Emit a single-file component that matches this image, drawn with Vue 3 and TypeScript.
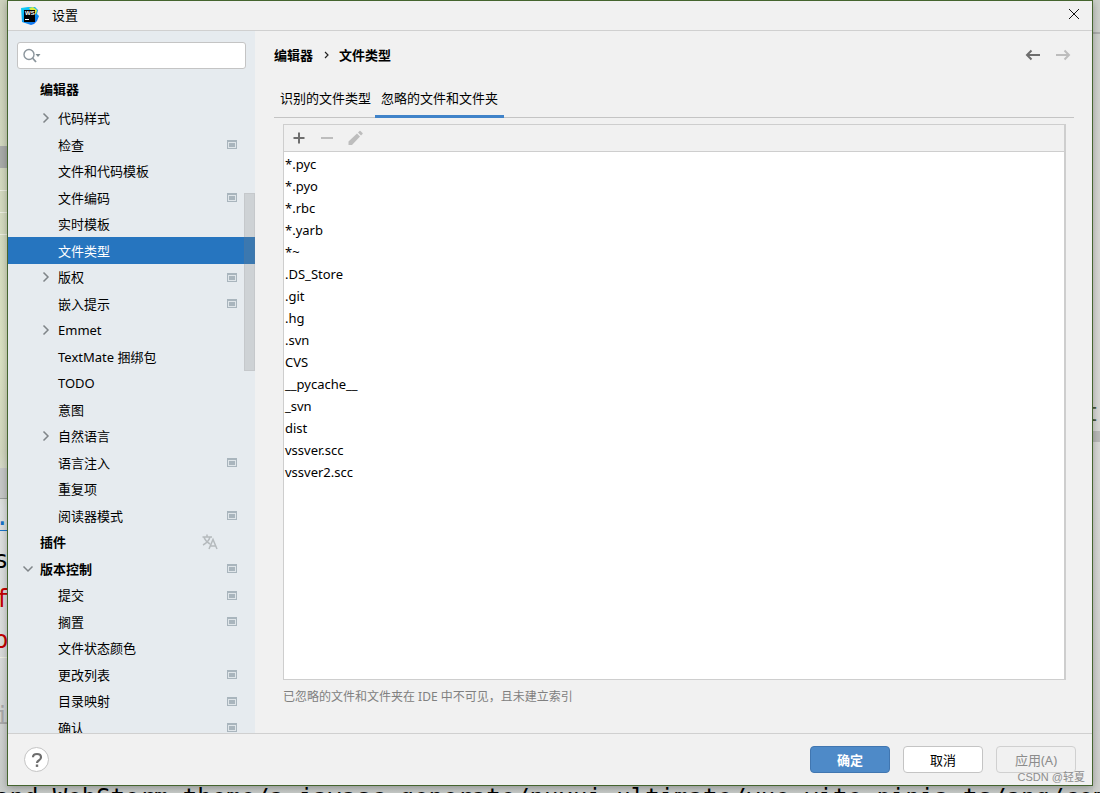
<script setup lang="ts">
import { ref } from 'vue'

interface TreeItem {
  label: string
  level: 0 | 1
  arrow?: 'right' | 'down'
  project?: boolean
  translate?: boolean
}

const items: TreeItem[] = [
  { label: '代码样式', level: 1, arrow: 'right' },
  { label: '检查', level: 1, project: true },
  { label: '文件和代码模板', level: 1 },
  { label: '文件编码', level: 1, project: true },
  { label: '实时模板', level: 1 },
  { label: '文件类型', level: 1 },
  { label: '版权', level: 1, arrow: 'right', project: true },
  { label: '嵌入提示', level: 1, project: true },
  { label: 'Emmet', level: 1, arrow: 'right' },
  { label: 'TextMate 捆绑包', level: 1 },
  { label: 'TODO', level: 1 },
  { label: '意图', level: 1 },
  { label: '自然语言', level: 1, arrow: 'right' },
  { label: '语言注入', level: 1, project: true },
  { label: '重复项', level: 1 },
  { label: '阅读器模式', level: 1, project: true },
  { label: '插件', level: 0, translate: true },
  { label: '版本控制', level: 0, arrow: 'down', project: true },
  { label: '提交', level: 1, project: true },
  { label: '搁置', level: 1, project: true },
  { label: '文件状态颜色', level: 1 },
  { label: '更改列表', level: 1, project: true },
  { label: '目录映射', level: 1, project: true },
  { label: '确认', level: 1, project: true },
]

const patterns: string[] = [
  '*.pyc', '*.pyo', '*.rbc', '*.yarb', '*~', '.DS_Store', '.git', '.hg',
  '.svn', 'CVS', '__pycache__', '_svn', 'dist', 'vssver.scc', 'vssver2.scc',
]

const tabs: string[] = ['识别的文件类型', '忽略的文件和文件夹']

const selected = ref('文件类型')
const activeTab = ref(1)
const query = ref('')
</script>

<template>
  <div class="desktop">
    <div class="editor" aria-hidden="true">
      <i class="band band-left"></i>
      <i class="rule r1"></i>
      <i class="rule r2"></i>
      <i class="rule r3"></i>
      <i class="rule r4"></i>
      <i class="band band-low"></i>
      <i class="band band-right"></i>
      <i class="band band-right-top"></i>
      <span class="code c-link">.</span>
      <span class="code c-s">s</span>
      <span class="code c-f">f</span>
      <span class="code c-o">o</span>
      <span class="code c-i">i</span>
      <span class="code c-t">t<b>(</b></span>
      <span class="code c-line">and WebStorm theme/a javasc generate/nuxui ultimate/vue vite pinia ts/ang/com</span>
    </div>

    <div class="window" role="dialog" aria-labelledby="dialog-title">
      <header class="titlebar">
        <svg class="logo" width="20" height="20" viewBox="0 0 20 20" aria-hidden="true">
          <defs>
            <linearGradient id="ws" x1="0" y1="0" x2="0.6" y2="1">
              <stop offset="0" stop-color="#12d5f5" />
              <stop offset="0.55" stop-color="#08a5f2" />
              <stop offset="1" stop-color="#1272f0" />
            </linearGradient>
          </defs>
          <path d="M1 2L8 1L15 1L18 4L17 8L19 10L17 15L14 18L11 19L5 17L2 16Z" fill="url(#ws)" />
          <path d="M9 2L13 1L17 4L16 8L12 6Z" fill="#dbe93c" />
          <rect x="4" y="4" width="11" height="12" fill="#000" />
          <text x="5" y="9" font-size="6" font-weight="700" fill="#fff" font-family="Liberation Sans, sans-serif">WS</text>
          <rect x="5" y="13" width="4" height="1" fill="#fff" />
        </svg>
        <h1 id="dialog-title">设置</h1>
        <button class="close" type="button" aria-label="关闭">
          <svg width="12" height="12" viewBox="0 0 12 12"><path d="M1 1L11 11M11 1L1 11" stroke="#111" fill="none" /></svg>
        </button>
      </header>

      <div class="body">
        <aside class="sidebar">
          <div class="search">
            <svg width="20" height="16" viewBox="0 0 20 16" aria-hidden="true">
              <circle cx="6" cy="6.5" r="5" fill="none" stroke="#8b959c" stroke-width="1.4" />
              <path d="M9.500 10L13 14" stroke="#8b959c" stroke-width="1.8" />
              <path d="M12.500 6H17.500L15 9Z" fill="#7f8b91" />
            </svg>
            <input v-model="query" type="text" aria-label="搜索设置" />
          </div>
          <nav class="tree" aria-label="设置">
            <a class="group" href="#">编辑器</a>
            <ul>
              <li v-for="item in items" :key="item.label">
                <a
                  href="#"
                  :class="['node', 'level-' + item.level, { selected: item.label === selected }]"
                  @click.prevent="selected = item.label"
                >
                  <span class="twisty">
                    <svg v-if="item.arrow === 'right'" width="10" height="12" viewBox="0 0 10 12"><path d="M2.500 1.500L7 6L2.500 10.500" /></svg>
                    <svg v-if="item.arrow === 'down'" width="12" height="10" viewBox="0 0 12 10"><path d="M1.500 2.500L6 7L10.500 2.500" /></svg>
                  </span>
                  <span class="label">{{ item.label }}</span>
                  <svg v-if="item.translate" class="translate" width="16" height="16" viewBox="0 0 16 16">
                    <path d="M0.500 3H10M5 0.500V3M2 3C3 6.500 5.500 8.500 8 10M8 3C7 6.500 4 9.500 1 11" />
                    <path d="M7 15L11 5.500L15 15M8.500 12H13.500" />
                  </svg>
                  <svg v-if="item.project" class="project" width="10" height="9" viewBox="0 0 10 9">
                    <path d="M0 0H10V9H0Z" fill="#a9b5bd" />
                    <path d="M1 2H9V8H1Z" fill="#dfe5e9" />
                    <path d="M2 3H8V7H2Z" fill="#a9b5bd" />
                  </svg>
                </a>
              </li>
            </ul>
          </nav>
          <div class="thumb"></div>
        </aside>

        <main class="content">
          <div class="crumbs">
            <span>编辑器</span>
            <svg width="6" height="8" viewBox="0 0 6 8" aria-hidden="true"><path d="M2 1L5 4L2 7" fill="none" stroke="#222" stroke-width="1.200" /></svg>
            <span>文件类型</span>
            <div class="history">
              <button type="button" aria-label="后退">
                <svg width="16" height="12" viewBox="0 0 16 12"><path d="M15 6H2M6.500 1.500L2 6L6.500 10.500" fill="none" stroke="#6e6e6e" stroke-width="2" /></svg>
              </button>
              <button type="button" aria-label="前进" disabled>
                <svg width="16" height="12" viewBox="0 0 16 12"><path d="M1 6H14M9.500 1.500L14 6L9.500 10.500" fill="none" stroke="#bdbdbd" stroke-width="2" /></svg>
              </button>
            </div>
          </div>

          <div class="tabs" role="tablist">
            <button
              v-for="(tab, i) in tabs"
              :key="tab"
              type="button"
              role="tab"
              :aria-selected="i === activeTab"
              :class="{ active: i === activeTab }"
              @click="activeTab = i"
            >{{ tab }}</button>
          </div>

          <section class="panel">
            <div class="toolbar">
              <button type="button" aria-label="添加">
                <svg width="16" height="16" viewBox="0 0 16 16"><path d="M8 2.500V13.500M2.500 8H13.500" stroke="#6e6e6e" stroke-width="2" /></svg>
              </button>
              <button type="button" aria-label="移除" disabled>
                <svg width="16" height="16" viewBox="0 0 16 16"><path d="M2 8H14" stroke="#bdbdbd" stroke-width="2" /></svg>
              </button>
              <button type="button" aria-label="编辑" disabled>
                <svg width="16" height="16" viewBox="0 0 16 16"><path d="M1.500 15V11.500L10 3.500L13 6.500L5 15ZM11 2.500L12.500 1Q13 0.500 13.500 1L15.500 3Q16 3.500 15.500 4L14 5.500Z" fill="#bdbdbd" /></svg>
              </button>
            </div>
            <ul class="patterns">
              <li v-for="p in patterns" :key="p">{{ p }}</li>
            </ul>
          </section>
          <p class="note">已忽略的文件和文件夹在 IDE 中不可见，且未建立索引</p>
        </main>
      </div>

      <footer class="footer">
        <button class="help" type="button" aria-label="帮助">
          <svg width="12" height="16" viewBox="0 0 12 16"><path d="M2 5.200Q2 2 6 2T10 5.200Q10 7 8 8.300Q6 9.500 6 11" fill="none" stroke="#6e6e6e" stroke-width="2.200" /><rect x="4.800" y="12.500" width="2.400" height="2.400" fill="#6e6e6e" /></svg>
        </button>
        <button class="btn primary" type="button">确定</button>
        <button class="btn" type="button">取消</button>
        <button class="btn" type="button" disabled>应用(A)</button>
      </footer>
      <span class="watermark">CSDN @轻夏</span>
    </div>
  </div>
</template>

<style>
html,
body {
  margin: 0;
}
</style>

<style scoped>
.desktop {
  position: relative;
  box-sizing: border-box;
  height: 100vh;
  padding: 0 7px 7px;
  overflow: hidden;
  background: linear-gradient(#cdd2bd 0, #dbe3c4 45%, #d3d8bf 57%, #dfe2e1 64%, #dcdedd 80%, #c9cdca 100%);
  color: #000;
  font: 13px/20px "Noto Sans", "Noto Sans CJK SC", sans-serif;
}
button,
input {
  font: inherit;
  color: inherit;
}
button {
  padding: 0;
  border: 0;
  background: none;
}
svg {
  display: block;
}
ul {
  margin: 0;
  padding: 0;
  list-style: none;
}
a {
  color: inherit;
  text-decoration: none;
}

/* Editor peeking out behind the dialog */
.editor::after {
  content: "";
  position: absolute;
  top: 0;
  right: 0;
  bottom: 0;
  width: 7px;
  background: linear-gradient(#cdd1cb, #d8d8d4 30%, #d9dad7 60%, #d0d1ce);
}
.band,
.rule,
.code {
  position: absolute;
}
.band-left { left: 0; top: 146px; width: 7px; height: 22px; background: #aaadaa; }
.band-low { left: 0; top: 468px; width: 7px; height: 30px; background: #c7c9c8; border-bottom: 1px solid #999f9c; }
.band-right { right: 0; top: 431px; width: 7px; height: 11px; background: #b9bab8; z-index: 1; }
.band-right-top { right: 0; top: 32px; width: 7px; height: 2px; background: #aeb0ae; z-index: 1; }
.rule { left: 0; width: 7px; height: 1px; background: #eef0e3; }
.r1 { top: 190px; }
.r2 { top: 212px; }
.r3 { top: 234px; }
.r4 { top: 657px; }
.code {
  font: 24px/30px "DejaVu Sans Mono", monospace;
  white-space: pre;
}
.c-link { left: -5px; top: 502px; color: #1874c8; border-bottom: 1px solid #1874c8; height: 28px; }
.c-s { left: -6px; top: 545px; }
.c-f { left: -5px; top: 584px; color: #c40000; }
.c-o { left: -6px; top: 625px; color: #c40000; }
.c-i { left: -5px; top: 701px; color: #aaa; }
.c-t { right: -13px; top: 398px; z-index: 1; color: #4c5637; }
.c-t b { color: #a8741a; font-weight: 400; }
.c-line { left: -5px; top: 783px; z-index: 1; }

.window {
  position: relative;
  z-index: 2;
  box-sizing: border-box;
  display: flex;
  flex-direction: column;
  height: 100%;
  border: 1px solid #45652f;
  background: #f1f1f1;
  box-shadow: 0 2px 8px rgba(0, 0, 0, 0.3);
}
.titlebar {
  display: flex;
  align-items: center;
  height: 29px;
  padding: 0 12px;
  border-bottom: 1px solid #d0d0d0;
}
.titlebar h1 {
  margin: 0 auto 0 12px;
  font-size: 13px;
  font-weight: 400;
  line-height: 18px;
  padding-bottom: 2px;
}
.close {
  padding-bottom: 3px;
}
.body {
  display: flex;
  flex: 1;
  min-height: 0;
}

.sidebar {
  position: relative;
  display: flex;
  flex-direction: column;
  width: 247px;
  overflow: hidden;
  background: #e6ebef;
}
.search {
  display: flex;
  align-items: center;
  box-sizing: border-box;
  flex: none;
  height: 27px;
  margin: 11px 9px 0;
  padding: 0 5px;
  border: 1px solid #c4c4c4;
  border-radius: 3px;
  background: #fff;
}
.search input {
  flex: 1;
  min-width: 0;
  padding: 0;
  border: 0;
  outline: 0;
  background: none;
}
.tree {
  flex: 1;
  min-height: 0;
  padding-top: 8px;
  overflow: hidden;
}
.group {
  display: block;
  height: 28px;
  padding-left: 32px;
  line-height: 25px;
  font-weight: 700;
}
.node {
  display: flex;
  align-items: center;
  height: 26px;
  padding-right: 18px;
}
li:nth-child(even) .node {
  height: 27px;
}
.twisty {
  display: flex;
  justify-content: center;
  flex: none;
  width: 12px;
  margin: 0 6px 0 32px;
  fill: none;
  stroke: #7f8488;
  stroke-width: 1.5;
}
.level-0 .twisty {
  margin-left: 14px;
}
.level-0 {
  font-weight: 700;
}
.label {
  flex: 1;
  white-space: nowrap;
}
.translate {
  margin-right: 19px;
  fill: none;
  stroke: #b5babd;
  stroke-width: 1.5;
}
.selected {
  background: #2675bf;
  color: #fff;
}
.thumb {
  position: absolute;
  top: 162px;
  right: 0;
  width: 11px;
  height: 178px;
  box-sizing: border-box;
  border: 1px solid rgba(120, 120, 120, 0.1);
  background: rgba(128, 128, 128, 0.23);
}

.content {
  display: flex;
  flex: 1;
  flex-direction: column;
  min-width: 0;
  padding: 14px 18px 26px 19px;
}
.crumbs {
  display: flex;
  align-items: center;
  gap: 10px;
  height: 20px;
  font-weight: 700;
}
.history {
  display: flex;
  gap: 14px;
  margin-left: auto;
  padding-right: 3px;
}
.tabs {
  display: flex;
  height: 52px;
  border-bottom: 1px solid #c4c4c4;
}
.tabs button {
  height: 53px;
  padding: 16px 5px 0;
  border-bottom: 3px solid transparent;
  box-sizing: border-box;
}
.tabs button:first-child {
  padding-right: 4px;
  padding-left: 6px;
}
.tabs .active {
  padding: 16px 6px 0;
  border-color: #4083c9;
}
.panel {
  display: flex;
  flex: 1;
  flex-direction: column;
  min-height: 0;
  margin: 6px 8px 0 9px;
  border: 1px solid #cecece;
  border-right-width: 2px;
  background: #fff;
}
.toolbar {
  display: flex;
  align-items: center;
  gap: 12px;
  height: 26px;
  padding-left: 7px;
  border-bottom: 1px solid #cecece;
  background: #f1f1f1;
}
.patterns {
  padding: 1px;
  line-height: 22px;
}
.note {
  margin: 7px 0 0 9px;
  color: #808080;
  font-size: 12px;
}

.footer {
  display: flex;
  align-items: center;
  gap: 13px;
  height: 51px;
  padding: 0 16px;
  border-top: 1px solid #d0d0d0;
}
.help {
  display: grid;
  place-items: center;
  width: 25px;
  height: 25px;
  margin-right: auto;
  border: 1px solid #c4c4c4;
  border-radius: 50%;
  background: #fff;
}
.btn {
  width: 80px;
  height: 27px;
  border: 1px solid #c4c4c4;
  border-radius: 4px;
  background: #fff;
}
.btn.primary {
  border-color: #4176b0;
  background: #4e8ac8;
  color: #fff;
  font-weight: 700;
}
.btn:disabled {
  border-color: #d0d0d0;
  background: #f1f1f1;
  color: #8c8c8c;
}
.watermark {
  position: absolute;
  right: 7px;
  bottom: 0;
  color: #8d8d8d;
  font-family: "Liberation Sans", "Noto Sans CJK SC", sans-serif;
  font-size: 11px;
  line-height: 16px;
}
</style>
